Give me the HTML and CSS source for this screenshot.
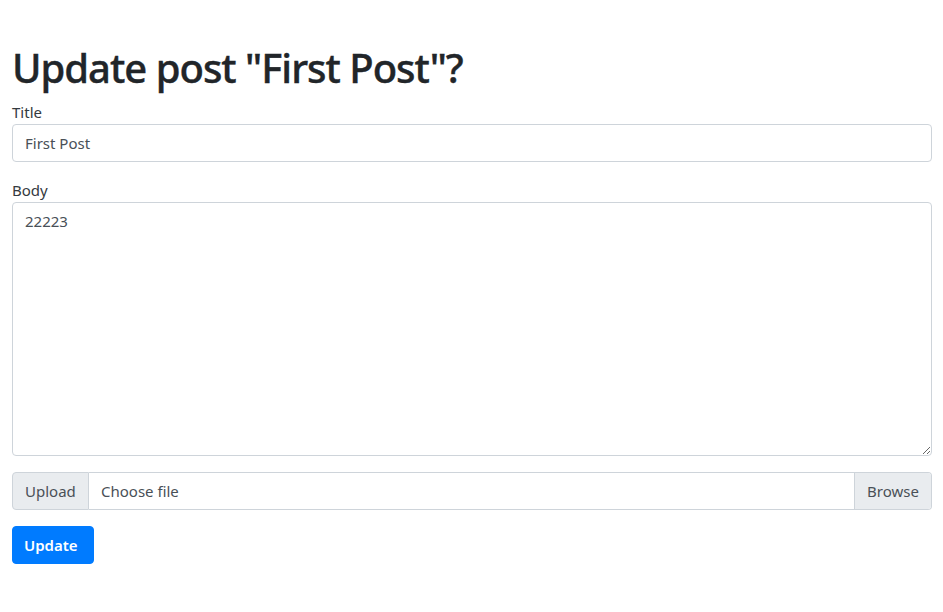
FILE: index.html
```html
<!DOCTYPE html>
<html lang="en">
<head>
    <meta charset="UTF-8">
    <title>Update post</title>
    <meta name="viewport" content="width=device-width, initial-scale=1.0">
    <link rel="stylesheet" href="styles.css">
</head>
<body>
    <div class="container">
        <h1>Update post "First Post"?</h1>
        <form>
            <div class="form-group">
                <label for="title">Title</label>
                <input type="text" id="title" class="form-control" value="First Post">
            </div>
            <div class="form-group">
                <label for="body">Body</label>
                <textarea id="body" class="form-control" rows="10">22223</textarea>
            </div>
            <div class="input-group">
                <div class="input-group-prepend">Upload</div>
                <div class="custom-file">
                    <span class="custom-file-label">Choose file</span>
                    <span class="custom-file-btn">Browse</span>
                </div>
            </div>
            <button type="button" class="btn">Update</button>
        </form>
    </div>
</body>
</html>
```

FILE: styles.css
```css
body {
    margin: 0;
    font-family: "Noto Sans", "Open Sans", Arial, sans-serif;
    font-size: 15px;
    line-height: 24px;
    color: #212529;
    background: #fff;
}
.container {
    padding: 44px 11px 0 12px;
}
h1 {
    margin: 0 0 8px 0;
    font-size: 40px;
    font-weight: 500;
    line-height: 48px;
    letter-spacing: -1px;
    -webkit-text-stroke: 0.4px #212529;
}
label {
    display: block;
    height: 24px;
    color: #343a40;
}
.form-group {
    margin-bottom: 16px;
}
.form-control {
    display: block;
    box-sizing: border-box;
    width: 100%;
    height: 38px;
    padding: 6px 12px;
    font-family: inherit;
    font-size: 15px;
    line-height: 24px;
    color: #495057;
    background: #fff;
    border: 1px solid #ced4da;
    border-radius: 4px;
    margin: 0;
}
textarea.form-control {
    height: 254px;
    resize: vertical;
}
.input-group {
    display: flex;
    height: 38px;
    margin-bottom: 16px;
    box-sizing: border-box;
}
.input-group-prepend {
    display: flex;
    align-items: center;
    box-sizing: border-box;
    width: 77px;
    padding: 0 12px;
    color: #495057;
    background: #e9ecef;
    border: 1px solid #ced4da;
    border-radius: 4px 0 0 4px;
}
.custom-file {
    flex: 1;
    display: flex;
    box-sizing: border-box;
    border: 1px solid #ced4da;
    border-left: none;
    border-radius: 0 4px 4px 0;
    overflow: hidden;
}
.custom-file-label {
    flex: 1;
    display: flex;
    align-items: center;
    padding: 0 12px;
    color: #495057;
}
.custom-file-btn {
    display: flex;
    align-items: center;
    box-sizing: border-box;
    width: 77px;
    padding: 0 12px;
    color: #495057;
    background: #e9ecef;
    border-left: 1px solid #ced4da;
}
.btn {
    display: block;
    box-sizing: border-box;
    width: 82px;
    height: 38px;
    padding: 6px 11px;
    font-family: inherit;
    font-size: 15px;
    font-weight: 600;
    line-height: 24px;
    text-align: left;
    color: #fff;
    background: #007bff;
    border: 1px solid #007bff;
    border-radius: 4px;
}
```
